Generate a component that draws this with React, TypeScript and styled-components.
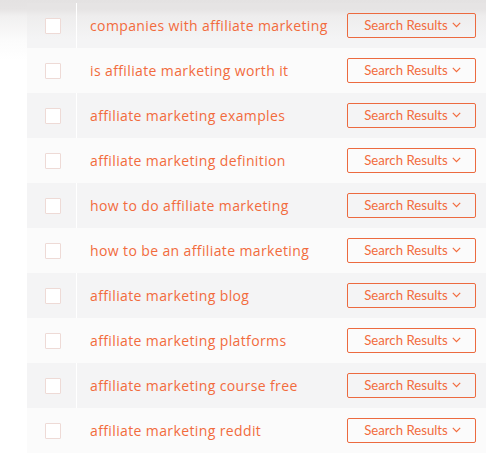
import React from "react";
import styled, { createGlobalStyle } from "styled-components";

const Global = createGlobalStyle`
  html, body { margin: 0; padding: 0; background: #ffffff; }
  body { font-family: "Open Sans", "Lato", sans-serif; overflow: hidden; }
`;

const Page = styled.div`
  width: 486px;
  height: 454px;
  padding-top: 3px;
  padding-left: 27px;
  box-sizing: border-box;
  background: linear-gradient(
    to bottom,
    #e4e2e2 0px,
    #e6e4e4 9px,
    #f1f0f0 16px,
    #fbfbfb 40px,
    #ffffff 60px
  );
  overflow: hidden;
`;

const Table = styled.div`
  display: flex;
  flex-direction: column;
`;

const Row = styled.div<{ $alt: boolean; $first: boolean }>`
  display: grid;
  grid-template-columns: 49px 1px 1fr auto;
  align-items: center;
  height: 45px;
  background: ${(p) =>
    p.$first
      ? "linear-gradient(to bottom, #e6e4e4 0px, #e6e4e4 6px, #eeeded 13px, #f4f4f5 36px)"
      : p.$alt
      ? "#f4f4f5"
      : "#fbfbfb"};
`;

const CheckCell = styled.div`
  display: flex;
  justify-content: center;
  align-items: center;
  padding-left: 2px;
`;

const Check = styled.span`
  display: block;
  width: 14px;
  height: 14px;
  border: 1px solid #eedad6;
  background: #ffffff;
  border-radius: 1px;
`;

const Divider = styled.div<{ $alt: boolean }>`
  align-self: stretch;
  background: ${(p) => (p.$alt ? "#ffffff" : "transparent")};
`;

const Keyword = styled.div`
  padding-left: 13px;
  font-size: 14px;
  letter-spacing: 0.38px;
  color: #f26b3d;
  white-space: nowrap;
`;

const Button = styled.button`
  display: flex;
  align-items: center;
  justify-content: center;
  gap: 4px;
  width: 129px;
  height: 25px;
  margin-right: 10px;
  padding: 0 0 1px 2px;
  border: 1px solid #ec6a3f;
  border-radius: 2px;
  background: transparent;
  font-family: "Lato", "Open Sans", sans-serif;
  font-size: 13.2px;
  color: #f26b3d;
  cursor: pointer;
`;

const Chevron = () => (
  <svg width="9" height="6" viewBox="0 0 9 6" fill="none">
    <path d="M0.8 0.8 L4.5 4.6 L8.2 0.8" stroke="#f26b3d" strokeWidth="1.2" />
  </svg>
);

const keywords = [
  "companies with affiliate marketing",
  "is affiliate marketing worth it",
  "affiliate marketing examples",
  "affiliate marketing definition",
  "how to do affiliate marketing",
  "how to be an affiliate marketing",
  "affiliate marketing blog",
  "affiliate marketing platforms",
  "affiliate marketing course free",
  "affiliate marketing reddit",
];

export default function App() {
  return (
    <Page>
      <Global />
      <Table>
        {keywords.map((k, i) => {
          const alt = i % 2 === 0;
          return (
            <Row key={k} $alt={alt} $first={i === 0}>
              <CheckCell>
                <Check />
              </CheckCell>
              <Divider $alt={alt} />
              <Keyword>{k}</Keyword>
              <Button>
                Search Results <Chevron />
              </Button>
            </Row>
          );
        })}
      </Table>
    </Page>
  );
}
